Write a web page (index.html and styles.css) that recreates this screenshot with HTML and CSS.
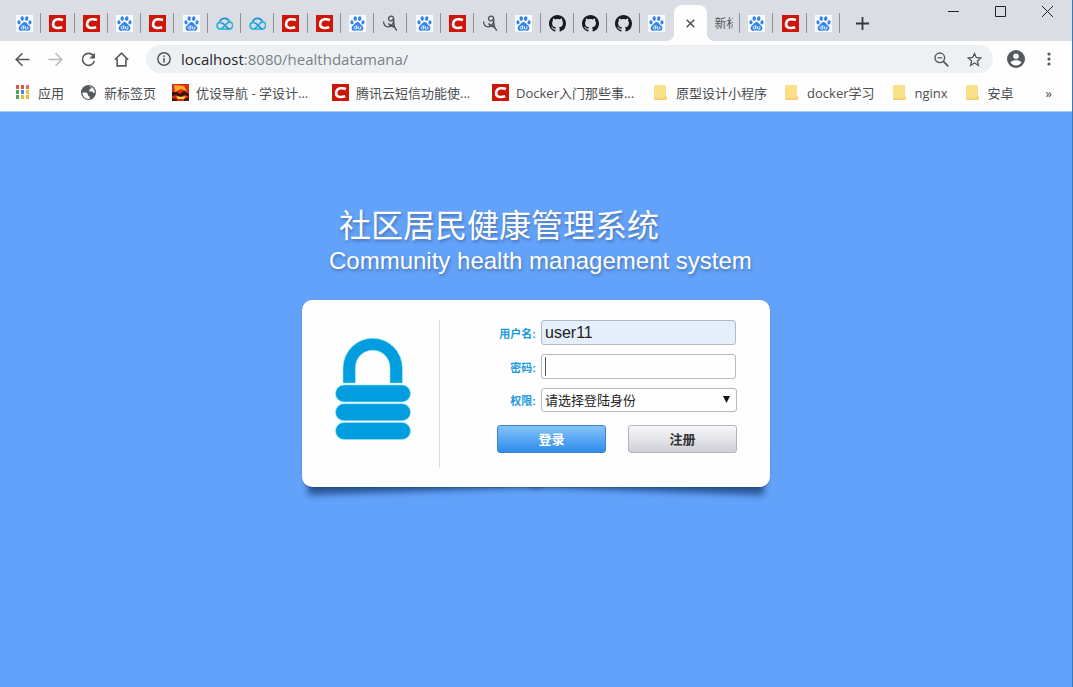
FILE: index.html
```html
<!DOCTYPE html>
<html lang="zh-CN">
<head>
  <meta charset="UTF-8">
  <title>社区居民健康管理系统</title>
  <link rel="stylesheet" href="styles.css">
</head>
<body>
  <svg class="sprite" aria-hidden="true">
    <symbol id="paw" viewBox="0 0 17 17">
      <rect width="17" height="17" fill="#fafdff"/>
      <g fill="#3583ea">
        <ellipse cx="6.2" cy="3.6" rx="1.7" ry="2.3"/>
        <ellipse cx="10.7" cy="3.6" rx="1.7" ry="2.3" transform="rotate(12 10.7 3.6)"/>
        <ellipse cx="3" cy="7.3" rx="1.6" ry="2.1" transform="rotate(-12 3 7.3)"/>
        <ellipse cx="14" cy="7.4" rx="1.6" ry="2.1" transform="rotate(8 14 7.4)"/>
        <path d="M8.5 7c1.9 0 2.4 1.7 3.6 2.8 1.4 1.1 2.6 2 2.2 3.9-.4 2-2 2.3-3.4 2.1-1.5-.3-3.2-.3-4.8 0-1.5.2-3-.1-3.4-2.1-.4-1.900.9-2.800 2.200-3.900C6.100 8.700 6.600 7 8.500 7z"/>
      </g>
      <g fill="none" stroke="#e8f3ff" stroke-width="1">
        <circle cx="6.4" cy="12.7" r="1.3"/>
        <path d="M7.8 10.200v4M9.500 11.300v1.900q0 .9.900.9h1.400v-2.800"/>
      </g>
    </symbol>
    <symbol id="csdn" viewBox="0 0 17 17">
      <rect width="17" height="17" fill="#cf1508"/>
      <path d="M14 5C11 3.900 4.800 3.100 4.100 8.700c-.5 4.800 4.800 4.900 9.100 3.600" fill="none" stroke="#fff" stroke-width="2.600"/>
    </symbol>
    <symbol id="cloud" viewBox="0 0 17 17">
      <g fill="none" stroke-width="1.700" stroke-linecap="round" stroke-linejoin="round">
        <path d="M3.700 7.300A4.900 4.900 0 0 1 13.200 6.800" stroke="#1f8fdc"/>
        <path d="M13.200 6.800A3.600 3.600 0 0 1 13 14H4.300A3.400 3.400 0 0 1 3.700 7.300" stroke="#25b2dc"/>
        <path d="M5.500 8Q7.300 8.300 8.500 9.800L12.600 13.800" stroke="#1f8fdc"/>
        <path d="M5.500 13.800Q6.500 13.200 8.500 10.800T13.200 6.800" stroke="#25b2dc"/>
      </g>
    </symbol>
    <symbol id="swirl" viewBox="0 0 17 17">
      <path d="M1.500 6.500Q2 12 6.500 11.800 11 11 11.800 5.300C12 1.800 10.500.9 8.800 1.100 6.500 1.500 5.800 4.300 7.300 5.500 8.800 6.500 11 5.500 11.600 3.500M11.700 5Q11.600 12.500 14.800 15.500M6.500 8.500Q9.500 12 13 12" fill="none" stroke="#484d52" stroke-width="1.300"/>
    </symbol>
    <symbol id="github" viewBox="0 0 16 16">
      <path fill="#171c22" d="M8 0C3.580 0 0 3.580 0 8c0 3.540 2.290 6.530 5.470 7.590.4.070.55-.17.55-.38 0-.19-.01-.82-.01-1.490-2.010.37-2.530-.49-2.690-.94-.09-.23-.48-.94-.82-1.130-.28-.15-.68-.52-.01-.53.63-.01 1.080.58 1.230.82.72 1.210 1.870.87 2.330.66.070-.52.28-.87.51-1.070-1.780-.2-3.640-.89-3.640-3.950 0-.87.31-1.590.82-2.150-.08-.2-.36-1.020.08-2.120 0 0 .67-.21 2.200.82.64-.18 1.320-.27 2-.27s1.360.09 2 .27c1.530-1.040 2.200-.82 2.200-.82.44 1.100.16 1.920.08 2.120.51.56.82 1.270.82 2.150 0 3.070-1.870 3.750-3.650 3.950.29.25.54.73.54 1.480 0 1.070-.01 1.930-.01 2.200 0 .21.15.46.55.38A8 8 0 0 0 16 8c0-4.420-3.580-8-8-8z"/>
    </symbol>
    <symbol id="folder" viewBox="0 0 17 17">
      <path d="M3 1h10q1 0 1 1v13q0 1-1 1H3q-1 0-1-1V2q0-1 1-1z" fill="#fbe08a"/>
      <path d="M2 14.500h12V15q0 1-1 1H3q-1 0-1-1z" fill="#f2cf6a"/>
      <path d="M12 12.500h3V16h-3z" fill="#f7d56f"/>
    </symbol>
  </svg>

  <header class="browser">
    <div class="tab-strip">
      <nav class="tabs">
        <div class="tab"><svg class="favicon"><use href="#paw"/></svg></div>
        <div class="tab"><svg class="favicon"><use href="#csdn"/></svg></div>
        <div class="tab"><svg class="favicon"><use href="#csdn"/></svg></div>
        <div class="tab"><svg class="favicon"><use href="#paw"/></svg></div>
        <div class="tab"><svg class="favicon"><use href="#csdn"/></svg></div>
        <div class="tab"><svg class="favicon"><use href="#paw"/></svg></div>
        <div class="tab"><svg class="favicon"><use href="#cloud"/></svg></div>
        <div class="tab"><svg class="favicon"><use href="#cloud"/></svg></div>
        <div class="tab"><svg class="favicon"><use href="#csdn"/></svg></div>
        <div class="tab"><svg class="favicon"><use href="#csdn"/></svg></div>
        <div class="tab"><svg class="favicon"><use href="#paw"/></svg></div>
        <div class="tab"><svg class="favicon"><use href="#swirl"/></svg></div>
        <div class="tab"><svg class="favicon"><use href="#paw"/></svg></div>
        <div class="tab"><svg class="favicon"><use href="#csdn"/></svg></div>
        <div class="tab"><svg class="favicon"><use href="#swirl"/></svg></div>
        <div class="tab"><svg class="favicon"><use href="#paw"/></svg></div>
        <div class="tab"><svg class="favicon"><use href="#github"/></svg></div>
        <div class="tab"><svg class="favicon"><use href="#github"/></svg></div>
        <div class="tab"><svg class="favicon"><use href="#github"/></svg></div>
        <div class="tab last"><svg class="favicon"><use href="#paw"/></svg></div>
        <div class="tab active">
          <button class="icon-button" aria-label="关闭标签页">
            <svg width="9" height="9" viewBox="0 0 9 9"><path d="M.7.7l7.600 7.600M8.300.7L.7 8.300" stroke="#45494d" stroke-width="1.400"/></svg>
          </button>
        </div>
        <div class="tab"><span class="tab-title">新标</span></div>
        <div class="tab"><svg class="favicon"><use href="#paw"/></svg></div>
        <div class="tab"><svg class="favicon"><use href="#csdn"/></svg></div>
        <div class="tab"><svg class="favicon"><use href="#paw"/></svg></div>
      </nav>
      <div class="strip-end">
        <button class="icon-button" aria-label="新标签页">
          <svg width="13" height="13" viewBox="0 0 13 13"><path d="M6.500 0v13M0 6.500h13" stroke="#35383c" stroke-width="1.800"/></svg>
        </button>
        <div class="window-controls">
          <button class="icon-button" aria-label="最小化">
            <svg width="11" height="11" viewBox="0 0 11 11"><path d="M0 5.500h11" stroke="#222"/></svg>
          </button>
          <button class="icon-button" aria-label="最大化">
            <svg width="11" height="11" viewBox="0 0 11 11"><path d="M.5.5h10v10H.5z" fill="none" stroke="#222"/></svg>
          </button>
          <button class="icon-button" aria-label="关闭">
            <svg width="11" height="11" viewBox="0 0 11 11"><path d="M0 0l11 11M11 0L0 11" stroke="#222"/></svg>
          </button>
        </div>
      </div>
    </div>

    <div class="toolbar">
      <div class="nav-buttons">
        <button class="icon-button" aria-label="后退">
          <svg width="15" height="15" viewBox="0 0 15 15"><path d="M14.500 7.500H1.500M7.500 1.200L1.200 7.500l6.300 6.300" fill="none" stroke="#55595e" stroke-width="1.600"/></svg>
        </button>
        <button class="icon-button" aria-label="前进">
          <svg width="15" height="15" viewBox="0 0 15 15"><path d="M.5 7.500h13M7.500 1.200l6.300 6.300-6.300 6.300" fill="none" stroke="#b9bbbe" stroke-width="1.600"/></svg>
        </button>
        <button class="icon-button" aria-label="重新加载">
          <svg width="15" height="15" viewBox="0 0 15 15"><path d="M12.500 4A6 6 0 1 0 13.300 9" fill="none" stroke="#55595e" stroke-width="1.600"/><path d="M14 .8v5.700H8.300z" fill="#55595e"/></svg>
        </button>
        <button class="icon-button" aria-label="主页">
          <svg width="15" height="15" viewBox="0 0 15 15"><path d="M.8 7.800L7.500 1.200l6.700 6.600M3.100 6.500v7.400h8.800V6.500" fill="none" stroke="#55595e" stroke-width="1.600"/></svg>
        </button>
      </div>
      <div class="address-bar">
        <svg width="14" height="14" viewBox="0 0 14 14"><circle cx="7" cy="7" r="6.200" fill="none" stroke="#55595e" stroke-width="1.500"/><path d="M7 6v4.500M7 3.400V5" stroke="#55595e" stroke-width="1.500"/></svg>
        <div class="url"><span class="host">localhost</span>:8080/healthdatamana/</div>
        <button class="icon-button" aria-label="缩放">
          <svg width="15" height="15" viewBox="0 0 15 15"><circle cx="5.800" cy="5.800" r="4.800" fill="none" stroke="#55595e" stroke-width="1.400"/><path d="M9.300 9.300l5 5" stroke="#55595e" stroke-width="1.800"/><path d="M3.500 5.800h4.600" stroke="#55595e" stroke-width="1.200"/></svg>
        </button>
        <button class="icon-button" aria-label="收藏">
          <svg width="15" height="15" viewBox="0 0 15 15"><path d="M7.500 1.500l1.800 4 4.400.5-3.300 2.900 1 4.400-3.900-2.300-3.900 2.300 1-4.400L1.300 6l4.400-.5z" fill="none" stroke="#55595e" stroke-width="1.300"/></svg>
        </button>
      </div>
      <button class="icon-button" aria-label="用户">
        <svg width="18" height="18" viewBox="0 0 18 18"><circle cx="9" cy="9" r="9" fill="#55595e"/><circle cx="9" cy="6.200" r="2.700" fill="#fff"/><path d="M3.500 12.600C4.200 10.800 6.800 10.300 9 10.300s4.800.5 5.500 2.300C13.200 14.500 11.200 15.500 9 15.500s-4.200-1-5.500-2.900z" fill="#fff"/></svg>
      </button>
      <button class="icon-button" aria-label="菜单">
        <svg width="4" height="14" viewBox="0 0 4 14" fill="#55595e"><circle cx="2" cy="2" r="1.600"/><circle cx="2" cy="7" r="1.600"/><circle cx="2" cy="12" r="1.600"/></svg>
      </button>
    </div>

    <nav class="bookmarks">
      <a href="#" class="bookmark">
        <svg class="favicon" viewBox="0 0 17 17">
          <path d="M2 1h4v4H2zM7 1h4v4H7z" fill="#dc5545"/><path d="M12 1h4v4h-4z" fill="#e07050"/>
          <path d="M2 6h4v4H2z" fill="#4ba35f"/><path d="M7 6h4v4H7z" fill="#4b86e8"/><path d="M12 6h4v4h-4z" fill="#efb73e"/>
          <path d="M2 11h4v4H2z" fill="#4ba35f"/><path d="M7 11h4v4H7zM12 11h4v4h-4z" fill="#efb73e"/>
          <path d="M5.500 0v17M10.500 0v17M15.500 0v17M0 5.500h17M0 10.500h17M0 15.500h17" stroke="#fefefe"/>
        </svg>应用</a>
      <a href="#" class="bookmark">
        <svg class="favicon" viewBox="0 0 17 17"><circle cx="8.500" cy="8.500" r="7.500" fill="#55595e"/><path d="M2.600 8.500h4l1.500 2v1.700h1.500v2.700c-4 .6-7.300-2.400-7-6.400zM8 2.600h3v1.800L9.300 5.600v1.800h3l1.300 1.500h1.200c.1-3.500-2.800-6.400-6.800-6.300z" fill="#fff"/></svg>新标签页</a>
      <a href="#" class="bookmark wide">
        <svg class="favicon" viewBox="0 0 17 17"><rect width="17" height="17" fill="#dd2c12"/><path d="M2 1l10 1 3 5-6-2-6 3z" fill="#fbad25"/><path d="M0 8h5l3 2 4-3 5 3v2l-5-1-3 2-5-2-4 1z" fill="#321409"/><path d="M4 12l5 1 5-1-2 3H6z" fill="#f1db35"/><path d="M0 14l5 1v2H0zM12 15l5-2v4h-5z" fill="#421a0b"/></svg>优设导航 - 学设计...</a>
      <a href="#" class="bookmark wide"><svg class="favicon"><use href="#csdn"/></svg>腾讯云短信功能使...</a>
      <a href="#" class="bookmark wide"><svg class="favicon"><use href="#csdn"/></svg>Docker入门那些事...</a>
      <a href="#" class="bookmark"><svg class="favicon"><use href="#folder"/></svg>原型设计小程序</a>
      <a href="#" class="bookmark"><svg class="favicon"><use href="#folder"/></svg>docker学习</a>
      <a href="#" class="bookmark"><svg class="favicon"><use href="#folder"/></svg>nginx</a>
      <a href="#" class="bookmark"><svg class="favicon"><use href="#folder"/></svg>安卓</a>
      <a href="#" class="bookmark more">»</a>
    </nav>
  </header>

  <main class="page">
    <div class="login">
      <div class="heading">
        <h1>社区居民健康管理系统</h1>
        <p>Community health management system</p>
      </div>

      <div class="card">
        <div class="card-body">
          <div class="lock">
            <svg width="76" height="102" viewBox="0 0 76 102" fill="#029ddf" stroke="#8feaf8" stroke-width=".6">
              <path d="M8 45V30a29.700 29.700 0 0 1 59.400 0v15H55V29.500a17.300 17.300 0 0 0-34.600 0V45z"/>
              <rect x=".5" y="47" width="75" height="17" rx="8.500"/>
              <rect x=".5" y="65.700" width="75" height="17" rx="8.500"/>
              <rect x=".5" y="84.500" width="75" height="17" rx="8.500"/>
            </svg>
          </div>
          <form class="login-form">
            <div class="row">
              <label for="username">用户名:</label>
              <input type="text" id="username" class="filled" value="user11">
            </div>
            <div class="row">
              <label for="password">密码:</label>
              <input type="password" id="password" class="focused">
            </div>
            <div class="row">
              <label for="role">权限:</label>
              <div class="select">
                <select id="role">
                  <option>请选择登陆身份</option>
                </select>
                <svg class="arrow" width="7" height="7" viewBox="0 0 7 7"><path d="M0 0h7L3.500 7z" fill="#111"/></svg>
              </div>
            </div>
            <div class="buttons">
              <button type="submit" class="primary">登录</button>
              <button type="button">注册</button>
            </div>
          </form>
        </div>
      </div>
    </div>
  </main>
</body>
</html>
```
FILE: styles.css
```css
* {
  box-sizing: border-box;
}
body {
  margin: 0;
  min-height: 100vh;
  display: flex;
  flex-direction: column;
  border-right: 1px solid #3c78b4;
  font-family: "Liberation Sans", "Noto Sans CJK SC", sans-serif;
}
.sprite {
  display: none;
}

/* browser window */
.browser {
  background: #fefefe;
  font-family: "Open Sans", "Noto Sans CJK SC", sans-serif;
}
.icon-button {
  display: flex;
  padding: 0;
  border: none;
  background: none;
}
.favicon {
  flex: none;
  width: 17px;
  height: 17px;
}
.tab-strip {
  display: flex;
  height: 41px;
  padding-left: 8px;
  background: #dadde3;
}
.tabs {
  flex: 1;
  display: flex;
  padding-top: 5px;
}
.tab {
  flex: 1 1 0;
  min-width: 0;
  display: flex;
  align-items: center;
  justify-content: center;
  background: linear-gradient(#8c9096, #8c9096) right 8px / 1px 20px no-repeat;
}
.tab.last {
  background: none;
}
.tab.active {
  position: relative;
  background: #fefefe;
  border-radius: 8px 8px 0 0;
}
.tab.active::before,
.tab.active::after {
  content: "";
  position: absolute;
  bottom: 0;
  width: 8px;
  height: 8px;
}
.tab.active::before {
  right: 100%;
  background: radial-gradient(circle at 0 0, transparent 8px, #fefefe 8px);
}
.tab.active::after {
  left: 100%;
  background: radial-gradient(circle at 100% 0, transparent 8px, #fefefe 8px);
}
.tab-title {
  width: 18px;
  overflow: hidden;
  white-space: nowrap;
  font-size: 12px;
  color: #55595e;
}
.strip-end {
  width: 232px;
  display: flex;
  justify-content: space-between;
  align-items: center;
  padding: 6px 19px 0 16px;
}
.window-controls {
  align-self: flex-start;
  display: flex;
  gap: 36px;
}
.toolbar {
  display: flex;
  align-items: center;
  gap: 22px;
  height: 36px;
  padding: 0 21px 0 15px;
}
.nav-buttons {
  display: flex;
  gap: 18px;
}
.address-bar {
  flex: 1;
  display: flex;
  align-items: center;
  gap: 18px;
  height: 28px;
  margin: 0 -8px 0 -5px;
  padding: 0 11px;
  border-radius: 14px;
  background: #eef1f3;
}
.url {
  flex: 1;
  margin-left: -8px;
  font-size: 15px;
  color: #7b8087;
}
.host {
  color: #25282c;
}
.bookmarks {
  display: flex;
  align-items: center;
  gap: 16px;
  height: 35px;
  padding: 0 20px 3px 14px;
  border-bottom: 1px solid #a9cdf6;
}
.bookmark {
  display: flex;
  align-items: center;
  gap: 7px;
  white-space: nowrap;
  font-size: 13px;
  line-height: 18px;
  color: #4a4d51;
  text-decoration: none;
}
.bookmark.wide {
  width: 144px;
}
.bookmark.more {
  margin-left: auto;
}

/* login page */
.page {
  flex: 1;
  display: flex;
  justify-content: center;
  align-items: flex-start;
  padding-top: 92px;
  background: #62a2fa;
}
.login {
  width: 468px;
}
.heading {
  padding-left: 27px;
  color: #fff;
  text-shadow: 1px 2px 3px rgba(50, 70, 110, 0.5);
}
.heading h1 {
  margin: 0;
  padding-left: 10px;
  font-size: 32px;
  line-height: 44px;
  font-weight: 400;
}
.heading p {
  margin: 0 0 26px;
  font-size: 24px;
  line-height: 26px;
  white-space: nowrap;
}
.card {
  position: relative;
  z-index: 0;
}
/* lifted corner shadows */
.card::before,
.card::after {
  content: "";
  position: absolute;
  z-index: -1;
  bottom: 8px;
  width: 50%;
  height: 40px;
  box-shadow: 0 12px 6px rgba(25, 65, 120, 0.8);
}
.card::before {
  left: 5px;
  transform: rotate(-2deg);
}
.card::after {
  right: 5px;
  transform: rotate(2deg);
}
.card-body {
  display: flex;
  padding: 20px 34px 19px 0;
  border-radius: 10px;
  background: #fefefe;
  box-shadow: 0 1px 1px rgba(40, 70, 110, 0.4);
}
.lock {
  flex: 0 0 138px;
  display: flex;
  align-items: flex-start;
  justify-content: center;
  padding: 18px 0 0 5px;
  min-height: 148px;
  border-right: 1px solid #dcdce0;
}
.login-form {
  flex: 1;
  display: flex;
  flex-direction: column;
  gap: 9px;
}
.row {
  display: flex;
  align-items: center;
  gap: 5px;
}
.row label {
  width: 96px;
  text-align: right;
  font-size: 11px;
  font-weight: bold;
  color: #1c9bdc;
}
.row input {
  width: 195px;
  height: 25px;
  padding: 0 3px;
  border: 1px solid #b4b8c2;
  border-radius: 3px;
  font: 16px "Liberation Sans", sans-serif;
  color: #222;
}
.row .filled {
  background: #e5eefb;
}
.row .focused {
  background: #fefefe linear-gradient(#555, #555) 3px center / 1px 19px no-repeat;
}
.select {
  position: relative;
}
.select select {
  display: block;
  width: 196px;
  height: 24px;
  padding: 0 3px;
  appearance: none;
  border: 1px solid #b4b8c2;
  border-radius: 3px;
  background: #fefefe;
  font: 13px "Noto Sans CJK SC", sans-serif;
  line-height: 20px;
  color: #222;
}
.arrow {
  position: absolute;
  right: 7px;
  top: 8px;
}
.buttons {
  display: flex;
  gap: 22px;
  margin-top: 4px;
  padding-left: 57px;
}
.buttons button {
  flex: 1;
  height: 28px;
  padding: 0 0 2px;
  border: 1px solid #b3b4bc;
  border-radius: 3px;
  background: linear-gradient(#f8f8fa, #cfd0d8);
  font: bold 13px "Noto Sans CJK SC", sans-serif;
  color: #333;
}
.buttons .primary {
  border-color: #3f83cc;
  background: linear-gradient(#84c3fa, #2f8cec);
  color: #fff;
}
```
